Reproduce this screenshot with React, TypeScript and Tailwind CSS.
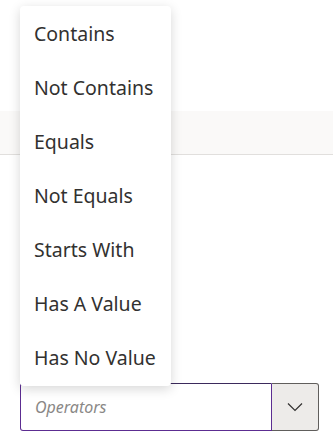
import React from 'react';

const operators = ['Contains', 'Not Contains', 'Equals', 'Not Equals', 'Starts With', 'Has A Value', 'Has No Value'];

const App = () => {
  return (
    <div className="relative h-[440px] w-[333px] overflow-hidden bg-white" style={{ fontFamily: '"Noto Sans", "Open Sans", sans-serif' }}>
      <div className="h-[42px] bg-white shadow-[0_2px_6px_rgba(0,0,0,0.08)]" />
      <div className="h-[69px] bg-white" />
      <div className="h-[44px] border-b border-[#e1dfdd] bg-[#faf9f8]" />

      <div className="mt-[228px] flex px-[20px]">
        <div className="flex h-[48px] w-[252px] shrink-0 items-center rounded-l-[3px] border border-[#5c2d91] border-t-[#3b2a5c] px-[14px]">
          <span className="text-[16px] italic text-[#8a8886]">Operators</span>
        </div>
        <button className="flex h-[48px] w-[47px] shrink-0 items-center justify-center rounded-r-[3px] border border-l-0 border-[#605e5c] bg-[#edebe9]">
          <svg width="16" height="10" viewBox="0 0 16 10" fill="none">
            <path d="M1 1.5 L8 8.5 L15 1.5" stroke="#323130" strokeWidth="1.2" />
          </svg>
        </button>
      </div>

      <div className="absolute left-[20px] top-[6px] w-[151px] rounded-[4px] bg-white py-[1px] shadow-[0_3px_12px_rgba(0,0,0,0.16)]">
        {operators.map((op) => (
          <div key={op} className="flex h-[54px] items-center whitespace-nowrap px-[14px] text-[19.5px] text-[#323130]">
            {op}
          </div>
        ))}
      </div>
    </div>
  );
};

export default App;
